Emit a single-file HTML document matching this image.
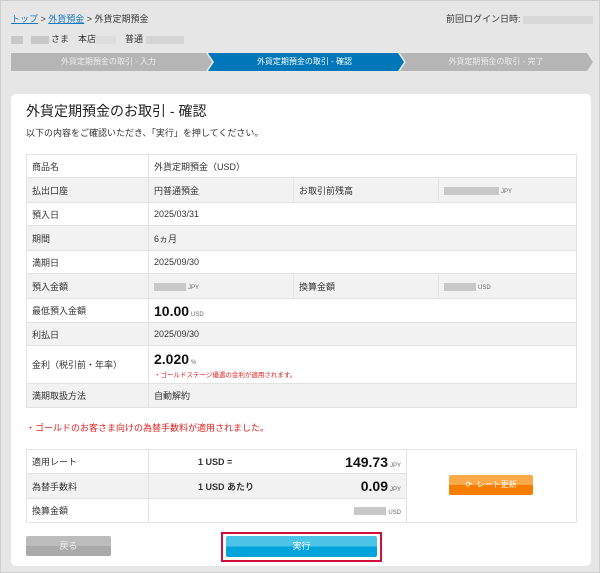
<!DOCTYPE html>
<html><head><meta charset="utf-8"><style>
*{margin:0;padding:0;box-sizing:border-box}
body{width:600px;height:573px;background:#e6e6e6;font-family:"Liberation Sans","Noto Sans CJK JP",sans-serif;font-size:9px;color:#333;position:relative;overflow:hidden;border:1px solid #cfcfcf}
.abs{position:absolute}
.blur{display:inline-block;background:#c8c8c8;height:8px;vertical-align:middle}
.step{position:absolute;top:52px;height:18px;color:#eee;font-size:8px;line-height:18px;text-align:center}
.panel{position:absolute;left:10px;top:93px;width:580px;height:472px;background:#fff;border-radius:5px}
table{border-collapse:collapse;position:absolute;font-size:9px}
td{border:1px solid #e2e2e2;padding:0 5px;vertical-align:middle}
tr.g td{background:#f2f2f2}
.u{font-size:6px;color:#666;margin-left:2px}
.big{font-size:14px;font-weight:bold;color:#111}
.fx{display:flex;align-items:center;justify-content:space-between;padding-left:44px}
</style></head><body>
<div class="abs" style="left:10px;top:11px"><span style="color:#1a7ac0;text-decoration:underline">トップ</span> &gt; <span style="color:#1a7ac0;text-decoration:underline">外貨預金</span> &gt; 外貨定期預金</div>
<div class="abs" style="left:445px;top:11px">前回ログイン日時: <span class="blur" style="width:70px;background:#d8d8d8"></span></div>
<div class="abs" style="left:10px;top:31px"><span class="blur" style="width:12px"></span> &nbsp; <span class="blur" style="width:18px"></span> さま　本店<span class="blur" style="width:20px;background:#ddd"></span>　普通 <span class="blur" style="width:38px;background:#d4d4d4"></span></div>
<svg class="abs" style="left:10px;top:52px" width="582" height="18">
<polygon points="0,0 195,0 201,9 195,18 0,18" fill="#b5b5b5"/>
<polygon points="197,0 387,0 393,9 387,18 197,18 203,9" fill="#0077b8"/>
<polygon points="389,0 576,0 582,9 576,18 389,18 395,9" fill="#b5b5b5"/>
</svg>
<div class="step" style="left:10px;width:195px">外貨定期預金の取引 - 入力</div>
<div class="step" style="left:207px;width:193px;color:#fff">外貨定期預金の取引 - 確認</div>
<div class="step" style="left:400px;width:190px">外貨定期預金の取引 - 完了</div>
<div class="panel"></div>
<div class="abs" style="left:25px;top:100px;font-size:14px;color:#222">外貨定期預金のお取引 - 確認</div>
<div class="abs" style="left:25px;top:125px;font-size:9px">以下の内容をご確認いただき、「実行」を押してください。</div>
<table style="left:25px;top:153px;width:551px">
<colgroup><col style="width:122px"><col style="width:145px"><col style="width:145px"><col></colgroup>
<tr style="height:23px"><td>商品名</td><td colspan="3">外貨定期預金（USD）</td></tr>
<tr class="g" style="height:25px"><td>払出口座</td><td>円普通預金</td><td>お取引前残高</td><td><span class="blur" style="width:55px"></span><span class="u">JPY</span></td></tr>
<tr style="height:23px"><td>預入日</td><td colspan="3">2025/03/31</td></tr>
<tr class="g" style="height:25px"><td>期間</td><td colspan="3">6ヵ月</td></tr>
<tr style="height:23px"><td>満期日</td><td colspan="3">2025/09/30</td></tr>
<tr class="g" style="height:25px"><td>預入金額</td><td><span class="blur" style="width:32px"></span><span class="u">JPY</span></td><td>換算金額</td><td><span class="blur" style="width:32px"></span><span class="u">USD</span></td></tr>
<tr style="height:24px"><td>最低預入金額</td><td colspan="3"><span class="big">10.00</span><span class="u">USD</span></td></tr>
<tr class="g" style="height:23px"><td>利払日</td><td colspan="3">2025/09/30</td></tr>
<tr style="height:38px"><td>金利（税引前・年率）</td><td colspan="3"><span class="big">2.020</span><span class="u">%</span><div style="color:#e02020;font-size:6.5px;margin-top:2px">・ゴールドステージ優遇の金利が適用されます。</div></td></tr>
<tr class="g" style="height:24px"><td>満期取扱方法</td><td colspan="3">自動解約</td></tr>
</table>
<div class="abs" style="left:25px;top:420px;color:#e02020;font-size:9px">・ゴールドのお客さま向けの為替手数料が適用されました。</div>
<table style="left:25px;top:448px;width:551px">
<colgroup><col style="width:122px"><col style="width:258px"><col></colgroup>
<tr style="height:24px"><td>適用レート</td><td><div class="fx"><b>1 USD =</b><span><span class="big">149.73</span><span class="u">JPY</span></span></div></td><td rowspan="3"></td></tr>
<tr class="g" style="height:25px"><td>為替手数料</td><td><div class="fx"><b>1 USD あたり</b><span><span class="big">0.09</span><span class="u">JPY</span></span></div></td></tr>
<tr style="height:24px"><td>換算金額</td><td style="text-align:right"><span class="blur" style="width:32px"></span><span class="u">USD</span></td></tr>
</table>
<div class="abs" style="left:448px;top:474px;width:84px;height:20px;border-radius:2px;background:linear-gradient(#fca94a 50%,#f57d00 50%);color:#fff;font-size:8px;line-height:20px;text-align:center">⟳ &nbsp;レート更新</div>
<div class="abs" style="left:25px;top:535px;width:85px;height:20px;border-radius:2px;background:linear-gradient(#bdbdbd 50%,#aaa 50%);color:#eee;font-size:9px;line-height:20px;text-align:center">戻る</div>
<div class="abs" style="left:220px;top:531px;width:161px;height:30px;border:2px solid #d0103a"></div>
<div class="abs" style="left:225px;top:535px;width:151px;height:21px;border-radius:2px;background:linear-gradient(#4ec3e8 50%,#00a4db 50%);color:#fff;font-size:9px;line-height:21px;text-align:center">実行</div>
</body></html>
